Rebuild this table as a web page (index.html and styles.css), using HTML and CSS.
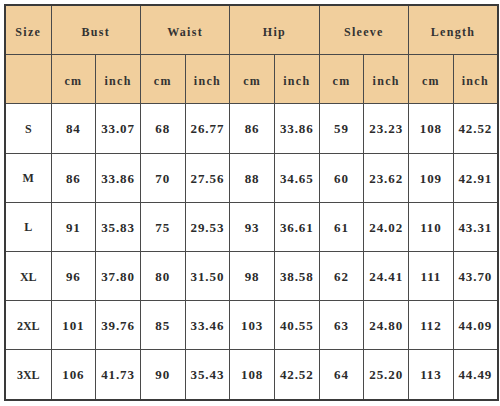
FILE: index.html
```html
<!DOCTYPE html>
<html>
<head>
<meta charset="utf-8">
<link rel="stylesheet" href="styles.css">
</head>
<body>
<table class="size-chart">
  <colgroup>
    <col class="c-size">
    <col class="c"><col class="c"><col class="c"><col class="c"><col class="c">
    <col class="c"><col class="c"><col class="c"><col class="c"><col class="c">
  </colgroup>
  <thead>
    <tr class="head">
      <th>Size</th>
      <th colspan="2">Bust</th>
      <th colspan="2">Waist</th>
      <th colspan="2">Hip</th>
      <th colspan="2">Sleeve</th>
      <th colspan="2">Length</th>
    </tr>
    <tr class="head">
      <th></th>
      <th>cm</th><th>inch</th>
      <th>cm</th><th>inch</th>
      <th>cm</th><th>inch</th>
      <th>cm</th><th>inch</th>
      <th>cm</th><th>inch</th>
    </tr>
  </thead>
  <tbody>
    <tr><td class="sz">S</td><td>84</td><td>33.07</td><td>68</td><td>26.77</td><td>86</td><td>33.86</td><td>59</td><td>23.23</td><td>108</td><td>42.52</td></tr>
    <tr><td class="sz">M</td><td>86</td><td>33.86</td><td>70</td><td>27.56</td><td>88</td><td>34.65</td><td>60</td><td>23.62</td><td>109</td><td>42.91</td></tr>
    <tr><td class="sz">L</td><td>91</td><td>35.83</td><td>75</td><td>29.53</td><td>93</td><td>36.61</td><td>61</td><td>24.02</td><td>110</td><td>43.31</td></tr>
    <tr><td class="sz">XL</td><td>96</td><td>37.80</td><td>80</td><td>31.50</td><td>98</td><td>38.58</td><td>62</td><td>24.41</td><td>111</td><td>43.70</td></tr>
    <tr><td class="sz">2XL</td><td>101</td><td>39.76</td><td>85</td><td>33.46</td><td>103</td><td>40.55</td><td>63</td><td>24.80</td><td>112</td><td>44.09</td></tr>
    <tr><td class="sz">3XL</td><td>106</td><td>41.73</td><td>90</td><td>35.43</td><td>108</td><td>42.52</td><td>64</td><td>25.20</td><td>113</td><td>44.49</td></tr>
  </tbody>
</table>
</body>
</html>
```
FILE: styles.css
```css
html, body {
  margin: 0;
  padding: 0;
  background: #ffffff;
}

body {
  padding: 4px 0 0 4px;
}

.size-chart {
  border-collapse: collapse;
  table-layout: fixed;
  width: 493px;
  border: 2px solid #3a3a3a;
}

.c-size { width: 46px; }
.c { width: 44.7px; }

.size-chart th,
.size-chart td {
  border: 1px solid #4a4a4a;
  padding: 0;
  text-align: center;
  vertical-align: middle;
  color: #2b2b2b;
  overflow: hidden;
  white-space: nowrap;
}

.head th {
  background: #f1cf9d;
  font-family: "Liberation Serif", "DejaVu Serif", serif;
  font-weight: bold;
  font-size: 12px;
  letter-spacing: 1.3px;
  color: #333333;
  height: 44.2px;
  padding-top: 4px;
}

.size-chart td {
  font-family: "Liberation Serif", "DejaVu Serif", serif;
  font-weight: bold;
  font-size: 13px;
  letter-spacing: 0.9px;
  height: 46.2px;
  padding-top: 2px;
}

.size-chart td.sz {
  font-size: 12px;
  letter-spacing: 0;
}
```
